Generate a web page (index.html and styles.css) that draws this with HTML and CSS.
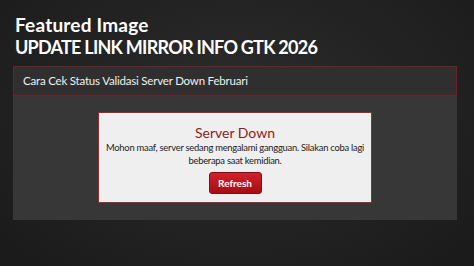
FILE: index.html
```html
<!DOCTYPE html>
<html lang="id">
<head>
<meta charset="utf-8">
<title>Featured Image</title>
<link rel="stylesheet" href="styles.css">
</head>
<body>
<div class="page">
  <header class="titles">
    <h1 class="title">Featured Image</h1>
    <h2 class="subtitle">UPDATE LINK MIRROR INFO GTK 2026</h2>
  </header>
  <section class="panel">
    <div class="panel-head">Cara Cek Status Validasi Server Down Februari</div>
    <div class="panel-body">
      <div class="dialog">
        <h3 class="dialog-title">Server Down</h3>
        <p class="dialog-text">Mohon maaf, server sedang mengalami gangguan. Silakan coba lagi beberapa saat kemidian.</p>
        <button class="btn">Refresh</button>
      </div>
    </div>
  </section>
</div>
</body>
</html>
```
FILE: styles.css
```css
* { box-sizing: border-box; }
html, body { margin: 0; padding: 0; }
body {
  width: 474px;
  height: 266px;
  overflow: hidden;
  font-family: "Lato", "Liberation Sans", sans-serif;
  background: radial-gradient(ellipse at 50% 40%, #2c2c2c 0%, #222 55%, #1a1a1a 100%);
}
.page { padding: 13px 17px 0 13px; }
.titles { padding-left: 2px; color: #fff; }
.title {
  margin: 0;
  font-size: 19px;
  line-height: 23px;
  font-weight: 700;
  letter-spacing: 0.2px;
}
.subtitle {
  margin: 0;
  font-size: 18px;
  line-height: 23px;
  font-weight: 700;
  letter-spacing: -0.75px;
}
.panel {
  margin-top: 7px;
  background: #373737;
  height: 154px;
}
.panel-head {
  height: 30px;
  border: 1px solid #6e2328;
  background: #2f2f2f;
  color: #f0f0f0;
  font-size: 11.5px;
  letter-spacing: -0.2px;
  padding: 0 0 0 9px;
  line-height: 28px;
}
.panel-body {
  display: flex;
  justify-content: center;
  padding-top: 16px;
}
.dialog {
  width: 274px;
  height: 91px;
  background: #efefef;
  border: 1px solid #9b2a2f;
  display: flex;
  flex-direction: column;
  align-items: center;
  padding-top: 12px;
}
.dialog-title {
  margin: 0;
  color: #8c1c20;
  font-size: 14px;
  line-height: 16px;
  font-weight: 400;
}
.dialog-text {
  margin: 0;
  color: #222;
  font-size: 9.4px;
  letter-spacing: -0.25px;
  line-height: 13px;
  text-align: center;
  padding: 0;
}
.btn {
  margin-top: 5px;
  width: 53px;
  height: 22px;
  border: 1px solid #8a0c10;
  border-radius: 3px;
  background: linear-gradient(#d0222a, #a40f14);
  color: #fff;
  font-family: "Lato", "Liberation Sans", sans-serif;
  font-size: 10px;
  font-weight: 700;
  padding: 0;
}
```
